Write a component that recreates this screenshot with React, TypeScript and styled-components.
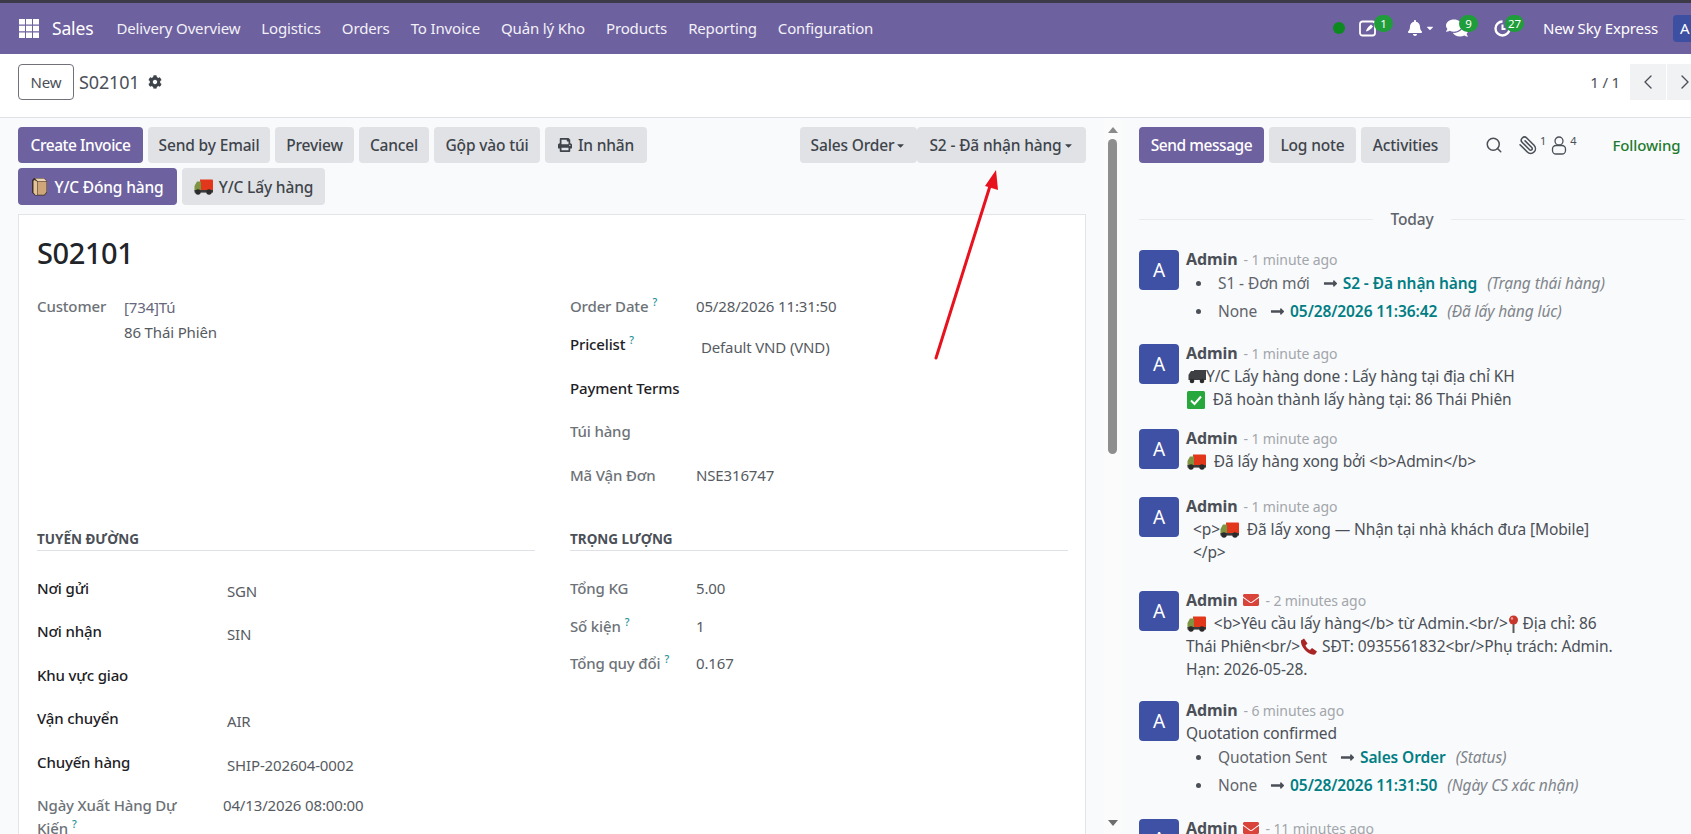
import React from "react";
import styled, { createGlobalStyle } from "styled-components";
import { FaBell, FaCaretDown, FaCog, FaComments, FaEnvelope, FaLongArrowAltRight, FaPrint } from "react-icons/fa";
import { FiChevronLeft, FiChevronRight, FiPaperclip, FiSearch } from "react-icons/fi";

const GlobalStyle = createGlobalStyle`
  html, body {
    margin: 0;
    height: 100%;
    overflow: hidden;
    background: #f9fafb;
    font-family: "Noto Sans", "Open Sans", sans-serif;
    font-size: 15px;
    letter-spacing: -0.15px;
    color: #4b5058;
  }
  * { box-sizing: border-box; }
`;

const Page = styled.div`
  width: 1712px;
  height: 834px;
  display: flex;
  flex-direction: column;
  overflow: hidden;
`;

const TopBar = styled.header`
  height: 54px;
  flex: none;
  display: flex;
  align-items: center;
  background: #6e619f;
  border-top: 3px solid #3c3a48;
  color: #fff;
  padding: 0 0 1px 19px;
`;

const Brand = styled.span`
  font-size: 17.5px;
  margin: 0 23px 0 13px;
`;

const MenuItem = styled.span`
  margin-right: 21px;
  color: #f3f1f8;
  white-space: nowrap;
`;

const Systray = styled.div`
  margin-left: auto;
  display: flex;
  align-items: center;
  height: 100%;
  position: relative;
`;

const Dot = styled.span`
  width: 12px;
  height: 12px;
  border-radius: 50%;
  background: #0d8a1f;
  margin-right: 14px;
`;

const TrayIcon = styled.span<{ $w: number }>`
  position: relative;
  width: ${(p) => p.$w}px;
  height: 18px;
  display: flex;
  align-items: center;
  color: #fff;
`;

const Badge = styled.span<{ $left: number }>`
  position: absolute;
  left: ${(p) => p.$left}px;
  top: -4px;
  min-width: 19px;
  height: 17px;
  padding: 0 3px;
  border-radius: 9px;
  background: #1f9d3a;
  color: #fff;
  font-size: 11.5px;
  line-height: 17px;
  text-align: center;
`;

const CompanyName = styled.span`
  margin: 0 15px 0 0;
  white-space: nowrap;
`;

const UserAvatar = styled.span`
  width: 39px;
  height: 27px;
  background: #3c4fa0;
  border-radius: 4px;
  padding-left: 7px;
  line-height: 27px;
  font-size: 15px;
`;

const ControlPanel = styled.div`
  height: 64px;
  flex: none;
  display: flex;
  align-items: center;
  background: #fff;
  border-bottom: 1px solid #dee2e6;
  padding: 0 9px 7px 18px;
`;

const NewButton = styled.button`
  height: 36px;
  width: 56px;
  padding: 0;
  font: inherit;
  letter-spacing: inherit;
  color: #4b5058;
  background: #fff;
  border: 1px solid #71717a;
  border-radius: 4px;
`;

const Crumb = styled.span`
  font-size: 18px;
  margin: 0 9px 0 5px;
`;

const Pager = styled.div`
  margin-left: auto;
  display: flex;
  align-items: center;
  gap: 1px;
`;

const PagerText = styled.span`
  margin-right: 9px;
`;

const PagerButton = styled.span`
  width: 36px;
  height: 36px;
  display: flex;
  align-items: center;
  justify-content: center;
  background: #f1f2f4;
  font-size: 24px;
  color: #4b5058;
  svg {
    stroke-width: 1.4;
  }
`;

const Main = styled.div`
  flex: 1;
  min-height: 0;
  display: flex;
`;

const FormSide = styled.main`
  width: 1104px;
  flex: none;
  padding: 9px 18px 0;
  display: flex;
  flex-direction: column;
`;

const ActionRow = styled.div`
  display: flex;
  gap: 5px;
  margin-bottom: 5px;
`;

const Btn = styled.button<{ $primary?: boolean; $tight?: boolean; $w: number; $h?: number }>`
  width: ${(p) => p.$w}px;
  height: ${(p) => p.$h ?? 36}px;
  flex: none;
  padding: 0;
  border: 0;
  border-radius: 4px;
  font: inherit;
  font-size: 15.5px;
  font-weight: 500;
  letter-spacing: ${(p) => (p.$tight ? "-0.45px" : "-0.15px")};
  white-space: nowrap;
  display: inline-flex;
  align-items: center;
  justify-content: center;
  gap: 6px;
  background: ${(p) => (p.$primary ? "#6e619f" : "#e0e2e6")};
  color: ${(p) => (p.$primary ? "#fff" : "#3f444b")};
`;

const Caret = styled(FaCaretDown)`
  margin-left: -5px;
`;

const StatusGroup = styled.div`
  margin-left: auto;
  display: flex;
`;

const Card = styled.section`
  flex: 1;
  min-height: 0;
  margin-top: 4px;
  background: #fff;
  border: 1px solid #e3e5e8;
  border-bottom: 0;
  padding: 20px 18px 0;
  overflow: hidden;
`;

const Title = styled.h1`
  margin: 0 0 24px;
  font-size: 29px;
  line-height: 36px;
  font-weight: 500;
  letter-spacing: -0.4px;
  color: #212529;
`;

const Columns = styled.div`
  display: grid;
  grid-template-columns: 498px 498px;
  column-gap: 35px;
`;

const Field = styled.div<{ $height: number }>`
  display: flex;
  align-items: flex-start;
  height: ${(p) => p.$height}px;
  line-height: 23px;
`;

const FieldLabel = styled.span<{ $w: number; $strong?: boolean }>`
  width: ${(p) => p.$w}px;
  flex: none;
  font-weight: 500;
  color: ${(p) => (p.$strong ? "#1d2126" : "#6d7278")};
`;

const FieldValue = styled.span<{ $pad?: number; $drop?: number }>`
  padding-left: ${(p) => p.$pad ?? 0}px;
  margin-top: ${(p) => p.$drop ?? 0}px;
  color: #565b62;
`;

const CustomerBlock = styled.div`
  line-height: 25px;
  color: #565b62;
`;

const CustomerName = styled.div`
  color: #66667e;
`;

const Help = styled.sup`
  color: #1f8f96;
  font-size: 10.5px;
  margin-left: 4px;
  line-height: 0;
`;

const SectionTitle = styled.div`
  height: 23px;
  line-height: 22px;
  margin-bottom: 26px;
  font-size: 13.5px;
  font-weight: 700;
  letter-spacing: 0;
  text-transform: uppercase;
  color: #4b5058;
  border-bottom: 1px solid #dee2e6;
`;

const Scrollbar = styled.div`
  width: 17px;
  flex: none;
  background: #fbfbfc;
  display: flex;
  flex-direction: column;
  align-items: center;
  padding-top: 9px;
  color: #8a8a8a;
`;

const ScrollArrow = styled.span<{ $down?: boolean }>`
  width: 0;
  height: 0;
  border-left: 5px solid transparent;
  border-right: 5px solid transparent;
  border-bottom: ${(p) => (p.$down ? "0" : "6px solid #8a8a8a")};
  border-top: ${(p) => (p.$down ? "6px solid #6d6d6d" : "0")};
`;

const ScrollThumb = styled.span`
  width: 9px;
  height: 315px;
  margin: 6px 0 auto;
  border-radius: 5px;
  background: #8e8e8e;
`;

const ScrollEnd = styled.span`
  height: 8px;
`;

const Chatter = styled.aside`
  flex: 1;
  min-width: 0;
  padding: 9px 0 0 18px;
  overflow: hidden;
  font-size: 15.5px;
  letter-spacing: -0.1px;
`;

const ChatterTools = styled.div`
  display: flex;
  align-items: center;
  gap: 5px;
  height: 36px;
`;

const ToolIcon = styled.span<{ $left: number }>`
  margin-left: ${(p) => p.$left}px;
  display: inline-flex;
  align-items: center;
  color: #4b5058;
  font-size: 18px;
`;

const ClipIcon = styled(FiPaperclip)`
  transform: scaleX(-1);
  font-size: 19px;
`;

const ToolSup = styled.sup`
  font-size: 11px;
  line-height: 0;
  margin: 0 0 8px 3px;
`;

const Following = styled.span`
  margin-left: 31px;
  font-size: 15px;
  font-weight: 500;
  color: #1f7a2e;
`;

const TodayRow = styled.div`
  display: flex;
  align-items: center;
  gap: 17px;
  height: 22px;
  width: 546px;
  margin: 45px 0 20px;
  font-weight: 500;
  color: #5f646b;
  &::before,
  &::after {
    content: "";
    flex: 1;
    height: 1px;
    background: #e9ebee;
  }
`;

const Message = styled.article<{ $height: number }>`
  display: flex;
  height: ${(p) => p.$height}px;
`;

const Avatar = styled.div`
  width: 40px;
  height: 40px;
  flex: none;
  border-radius: 4px;
  background: #3f51a5;
  color: #fff;
  text-align: center;
  font-size: 19px;
  line-height: 40px;
  letter-spacing: 0;
  margin-right: 7px;
`;

const Body = styled.div`
  margin-top: -3px;
  width: 440px;
  line-height: 23px;
`;

const Head = styled.div`
  display: flex;
  align-items: center;
  gap: 6px;
  height: 24px;
  white-space: nowrap;
`;

const Author = styled.span`
  font-size: 16px;
  font-weight: 700;
  color: #4b5058;
`;

const When = styled.span`
  font-size: 14px;
  color: #a2a6ac;
`;

const Mail = styled.span`
  display: inline-flex;
  color: #d9443a;
  font-size: 16px;
`;

const Line = styled.div<{ $indent?: number }>`
  display: flex;
  align-items: center;
  height: 23px;
  white-space: pre;
  padding-left: ${(p) => p.$indent ?? 0}px;
`;

const Changes = styled.ul`
  margin: -2px 0 0;
  padding: 0;
  list-style: none;
`;

const Change = styled.li`
  display: flex;
  align-items: center;
  height: 28px;
  padding-left: 10px;
  white-space: nowrap;
  &::before {
    content: "";
    width: 5px;
    height: 5px;
    border-radius: 50%;
    background: #4b5058;
    margin-right: 17px;
  }
`;

const OldValue = styled.span`
  color: #5f646b;
  margin-right: 13px;
`;

const NewValue = styled.span`
  margin: 0 10px 0 5px;
  font-weight: 600;
  color: #017e84;
`;

const FieldName = styled.span`
  font-style: italic;
  color: #80858b;
`;

const ArrowOverlay = styled.svg`
  position: absolute;
  left: 0;
  top: 0;
  pointer-events: none;
`;

const AppsIcon = () => (
  <svg width="20" height="19" viewBox="0 0 20 19">
    <path
      d="M0 0h6v5.500H0zM7 0h6v5.500H7zM14 0h6v5.500h-6zM0 6.750h6v5.500H0zM7 6.750h6v5.500H7zM14 6.750h6v5.500h-6zM0 13.500h6V19H0zM7 13.500h6V19H7zM14 13.500h6V19h-6z"
      fill="#fff"
    />
  </svg>
);

const Truck = () => (
  <svg width="19" height="16" viewBox="0 0 19 16" style={{ flex: "none" }}>
    <path d="M6 0.500h12a1 1 0 0 1 1 1V12H6z" fill="#e2371a" />
    <path d="M1 6 3 2.500h4V12H0.500V7z" fill="#7f9440" />
    <rect x="0.500" y="11" width="18.500" height="2.600" fill="#3b3b3b" />
    <circle cx="4" cy="13" r="2.700" fill="#2b2b2b" />
    <circle cx="15" cy="13" r="2.700" fill="#2b2b2b" />
  </svg>
);

const DarkTruck = () => (
  <svg width="18" height="15" viewBox="0 0 18 15" style={{ flex: "none" }}>
    <path d="M6 1h12v10H6zM1 5l2-3h3v9H0.500V6z" fill="#3e3f42" />
    <circle cx="4" cy="12" r="2.300" fill="#2b2b2b" />
    <circle cx="14" cy="12" r="2.300" fill="#2b2b2b" />
  </svg>
);

const BoxEmoji = () => (
  <svg width="17" height="19" viewBox="0 0 17 19" style={{ flex: "none" }}>
    <path d="M3 1h10l3 3v11.500L13.500 18.500H4L1 15.500V3z" fill="#3c2e28" />
    <path d="M4 1.500h9L15.500 4H6.500z" fill="#ecd5b6" />
    <path d="M3.500 3 6 4.500V18H4.500L2.500 15.500V4z" fill="#e3c39c" />
    <path d="M6.500 4.500h9v10.500l-2.300 2.800H6.500z" fill="#cfa679" />
  </svg>
);

const CheckEmoji = () => (
  <svg width="18" height="18" viewBox="0 0 18 18" style={{ flex: "none" }}>
    <rect width="18" height="18" rx="1.500" fill="#27a73c" />
    <path d="M4 9.500 7.500 13 14 5.500" fill="none" stroke="#fff" strokeWidth="2" />
  </svg>
);

const PinEmoji = () => (
  <svg width="11" height="18" viewBox="0 0 11 18" style={{ flex: "none" }}>
    <rect x="4.500" y="7" width="2" height="11" fill="#5c5c5c" />
    <circle cx="5.500" cy="5" r="4.500" fill="#c9372c" />
    <circle cx="4" cy="3.500" r="1.200" fill="#ee9a90" />
  </svg>
);

const PhoneEmoji = () => (
  <svg width="18" height="18" viewBox="0 0 18 18" style={{ flex: "none" }}>
    <path
      d="M1 2.500 4 .5l3.500 5-2 2c.8 2 2.500 3.700 4.500 4.500l2-2 5 3.500-2 3C9 18 0 9 1 2.500z"
      fill="#a82626"
    />
  </svg>
);

const NoteIcon = () => (
  <svg width="18" height="18" viewBox="0 0 18 18">
    <rect x="1" y="2.500" width="15" height="14" rx="2.500" fill="none" stroke="#fff" strokeWidth="1.800" />
    <path d="M7 12.500c0-2 3-5.500 5-7l2 2c-1.500 2-5 5-7 5z" fill="#fff" />
  </svg>
);

const ClockIcon = () => (
  <svg width="17" height="17" viewBox="0 0 17 17">
    <path d="M8.500 1.500a7 7 0 1 0 7 7" fill="none" stroke="#fff" strokeWidth="2.400" />
    <path d="M8.500 4.500v4.500h3" fill="none" stroke="#fff" strokeWidth="2" />
  </svg>
);

const FollowersIcon = () => (
  <svg width="16" height="19" viewBox="0 0 16 19">
    <circle cx="8" cy="5" r="4" fill="none" stroke="#4b5058" strokeWidth="1.300" />
    <rect x="1.500" y="9.500" width="13" height="8.500" rx="3.500" fill="none" stroke="#4b5058" strokeWidth="1.300" />
  </svg>
);

const menu = ["Delivery Overview", "Logistics", "Orders", "To Invoice", "Quản lý Kho", "Products", "Reporting", "Configuration"];

const App = () => {
  return (
    <Page>
      <GlobalStyle />
      <TopBar>
        <AppsIcon />
        <Brand>Sales</Brand>
        {menu.map((m) => (
          <MenuItem key={m}>{m}</MenuItem>
        ))}
        <Systray>
          <Dot />
          <TrayIcon $w={48}>
            <NoteIcon />
            <Badge $left={15}>1</Badge>
          </TrayIcon>
          <TrayIcon $w={39}>
            <FaBell size={16} />
            <FaCaretDown size={10} style={{ marginLeft: 2 }} />
          </TrayIcon>
          <TrayIcon $w={48}>
            <FaComments size={22} />
            <Badge $left={13}>9</Badge>
          </TrayIcon>
          <TrayIcon $w={49}>
            <ClockIcon />
            <Badge $left={11}>27</Badge>
          </TrayIcon>
          <CompanyName>New Sky Express</CompanyName>
          <UserAvatar>A</UserAvatar>
        </Systray>
      </TopBar>

      <ControlPanel>
        <NewButton>New</NewButton>
        <Crumb>S02101</Crumb>
        <FaCog size={14} color="#3f444b" />
        <Pager>
          <PagerText>1 / 1</PagerText>
          <PagerButton>
            <FiChevronLeft />
          </PagerButton>
          <PagerButton>
            <FiChevronRight />
          </PagerButton>
        </Pager>
      </ControlPanel>

      <Main>
        <FormSide>
          <ActionRow>
            <Btn $primary $tight $w={125}>Create Invoice</Btn>
            <Btn $w={122}>Send by Email</Btn>
            <Btn $w={79}>Preview</Btn>
            <Btn $w={70}>Cancel</Btn>
            <Btn $w={106}>Gộp vào túi</Btn>
            <Btn $w={102}>
              <FaPrint size={14} /> In nhãn
            </Btn>
            <StatusGroup>
              <Btn $w={117}>
                Sales Order <Caret size={11} />
              </Btn>
              <Btn $w={169}>
                S2 - Đã nhận hàng <Caret size={11} />
              </Btn>
            </StatusGroup>
          </ActionRow>
          <ActionRow>
            <Btn $primary $w={159} $h={37}>
              <BoxEmoji /> Y/C Đóng hàng
            </Btn>
            <Btn $w={143} $h={37}>
              <Truck /> Y/C Lấy hàng
            </Btn>
          </ActionRow>

          <Card>
            <Title>S02101</Title>
            <Columns>
              <div>
                <Field $height={233}>
                  <FieldLabel $w={87}>Customer</FieldLabel>
                  <CustomerBlock>
                    <CustomerName>[734]Tú</CustomerName>
                    86 Thái Phiên
                  </CustomerBlock>
                </Field>
              </div>
              <div>
                <Field $height={38}>
                  <FieldLabel $w={126}>
                    Order Date<Help>?</Help>
                  </FieldLabel>
                  <FieldValue>05/28/2026 11:31:50</FieldValue>
                </Field>
                <Field $height={43.5}>
                  <FieldLabel $w={126} $strong>
                    Pricelist<Help>?</Help>
                  </FieldLabel>
                  <FieldValue $pad={5} $drop={3}>Default VND (VND)</FieldValue>
                </Field>
                <Field $height={43.5}>
                  <FieldLabel $w={126} $strong>Payment Terms</FieldLabel>
                </Field>
                <Field $height={43.5}>
                  <FieldLabel $w={126}>Túi hàng</FieldLabel>
                </Field>
                <Field $height={64.5}>
                  <FieldLabel $w={126}>Mã Vận Đơn</FieldLabel>
                  <FieldValue>NSE316747</FieldValue>
                </Field>
              </div>
              <div>
                <SectionTitle>Tuyến đường</SectionTitle>
                <Field $height={43.4}>
                  <FieldLabel $w={186} $strong>Nơi gửi</FieldLabel>
                  <FieldValue $pad={4} $drop={3}>SGN</FieldValue>
                </Field>
                <Field $height={43.4}>
                  <FieldLabel $w={186} $strong>Nơi nhận</FieldLabel>
                  <FieldValue $pad={4} $drop={3}>SIN</FieldValue>
                </Field>
                <Field $height={43.4}>
                  <FieldLabel $w={186} $strong>Khu vực giao</FieldLabel>
                </Field>
                <Field $height={43.4}>
                  <FieldLabel $w={186} $strong>Vận chuyển</FieldLabel>
                  <FieldValue $pad={4} $drop={3}>AIR</FieldValue>
                </Field>
                <Field $height={43.4}>
                  <FieldLabel $w={186} $strong>Chuyến hàng</FieldLabel>
                  <FieldValue $pad={4} $drop={3}>SHIP-202604-0002</FieldValue>
                </Field>
                <Field $height={46}>
                  <FieldLabel $w={186}>
                    Ngày Xuất Hàng Dự
                    <br />
                    Kiến<Help>?</Help>
                  </FieldLabel>
                  <FieldValue>04/13/2026 08:00:00</FieldValue>
                </Field>
              </div>
              <div>
                <SectionTitle>Trọng lượng</SectionTitle>
                <Field $height={37.5}>
                  <FieldLabel $w={126}>Tổng KG</FieldLabel>
                  <FieldValue>5.00</FieldValue>
                </Field>
                <Field $height={37.5}>
                  <FieldLabel $w={126}>
                    Số kiện<Help>?</Help>
                  </FieldLabel>
                  <FieldValue>1</FieldValue>
                </Field>
                <Field $height={37.5}>
                  <FieldLabel $w={126}>
                    Tổng quy đổi<Help>?</Help>
                  </FieldLabel>
                  <FieldValue>0.167</FieldValue>
                </Field>
              </div>
            </Columns>
          </Card>
        </FormSide>

        <Scrollbar>
          <ScrollArrow />
          <ScrollThumb />
          <ScrollArrow $down />
          <ScrollEnd />
        </Scrollbar>

        <Chatter>
          <ChatterTools>
            <Btn $primary $tight $w={125}>Send message</Btn>
            <Btn $w={87}>Log note</Btn>
            <Btn $w={89}>Activities</Btn>
            <ToolIcon $left={30}>
              <FiSearch />
            </ToolIcon>
            <ToolIcon $left={10}>
              <ClipIcon />
              <ToolSup>1</ToolSup>
            </ToolIcon>
            <ToolIcon $left={0}>
              <FollowersIcon />
              <ToolSup>4</ToolSup>
            </ToolIcon>
            <Following>Following</Following>
          </ChatterTools>

          <TodayRow>Today</TodayRow>

          <Message $height={94}>
            <Avatar>A</Avatar>
            <Body>
              <Head>
                <Author>Admin</Author>
                <When>- 1 minute ago</When>
              </Head>
              <Changes>
                <Change>
                  <OldValue>S1 - Đơn mới</OldValue>
                  <FaLongArrowAltRight size={15} />
                  <NewValue>S2 - Đã nhận hàng</NewValue>
                  <FieldName>(Trạng thái hàng)</FieldName>
                </Change>
                <Change>
                  <OldValue>None</OldValue>
                  <FaLongArrowAltRight size={15} />
                  <NewValue>05/28/2026 11:36:42</NewValue>
                  <FieldName>(Đã lấy hàng lúc)</FieldName>
                </Change>
              </Changes>
            </Body>
          </Message>

          <Message $height={85}>
            <Avatar>A</Avatar>
            <Body>
              <Head>
                <Author>Admin</Author>
                <When>- 1 minute ago</When>
              </Head>
              <Line $indent={2}>
                <DarkTruck />Y/C Lấy hàng done : Lấy hàng tại địa chỉ KH
              </Line>
              <Line $indent={1}>
                <CheckEmoji />  Đã hoàn thành lấy hàng tại: 86 Thái Phiên
              </Line>
            </Body>
          </Message>

          <Message $height={68}>
            <Avatar>A</Avatar>
            <Body>
              <Head>
                <Author>Admin</Author>
                <When>- 1 minute ago</When>
              </Head>
              <Line $indent={1}>
                <Truck />  Đã lấy hàng xong bởi &lt;b&gt;Admin&lt;/b&gt;
              </Line>
            </Body>
          </Message>

          <Message $height={94}>
            <Avatar>A</Avatar>
            <Body>
              <Head>
                <Author>Admin</Author>
                <When>- 1 minute ago</When>
              </Head>
              <Line $indent={7}>
                &lt;p&gt;<Truck />  Đã lấy xong — Nhận tại nhà khách đưa [Mobile]
              </Line>
              <Line $indent={7}>&lt;/p&gt;</Line>
            </Body>
          </Message>

          <Message $height={110}>
            <Avatar>A</Avatar>
            <Body>
              <Head>
                <Author>Admin</Author>
                <Mail>
                  <FaEnvelope />
                </Mail>
                <When>- 2 minutes ago</When>
              </Head>
              <Line $indent={1}>
                <Truck />  &lt;b&gt;Yêu cầu lấy hàng&lt;/b&gt; từ Admin.&lt;br/&gt;<PinEmoji /> Địa chỉ: 86
              </Line>
              <Line>
                Thái Phiên&lt;br/&gt;<PhoneEmoji /> SĐT: 0935561832&lt;br/&gt;Phụ trách: Admin.
              </Line>
              <Line>Hạn: 2026-05-28.</Line>
            </Body>
          </Message>

          <Message $height={118}>
            <Avatar>A</Avatar>
            <Body>
              <Head>
                <Author>Admin</Author>
                <When>- 6 minutes ago</When>
              </Head>
              <Line>Quotation confirmed</Line>
              <Changes>
                <Change>
                  <OldValue>Quotation Sent</OldValue>
                  <FaLongArrowAltRight size={15} />
                  <NewValue>Sales Order</NewValue>
                  <FieldName>(Status)</FieldName>
                </Change>
                <Change>
                  <OldValue>None</OldValue>
                  <FaLongArrowAltRight size={15} />
                  <NewValue>05/28/2026 11:31:50</NewValue>
                  <FieldName>(Ngày CS xác nhận)</FieldName>
                </Change>
              </Changes>
            </Body>
          </Message>

          <Message $height={40}>
            <Avatar>A</Avatar>
            <Body>
              <Head>
                <Author>Admin</Author>
                <Mail>
                  <FaEnvelope />
                </Mail>
                <When>- 11 minutes ago</When>
              </Head>
            </Body>
          </Message>
        </Chatter>
      </Main>

      <ArrowOverlay width="1691" height="834" viewBox="0 0 1691 834">
        <path d="M936 358 L990 186" stroke="#e8121e" strokeWidth="3" strokeLinecap="round" />
        <path d="M996 170 L998 190 L985 186 Z" fill="#e8121e" />
      </ArrowOverlay>
    </Page>
  );
};

export default App;
